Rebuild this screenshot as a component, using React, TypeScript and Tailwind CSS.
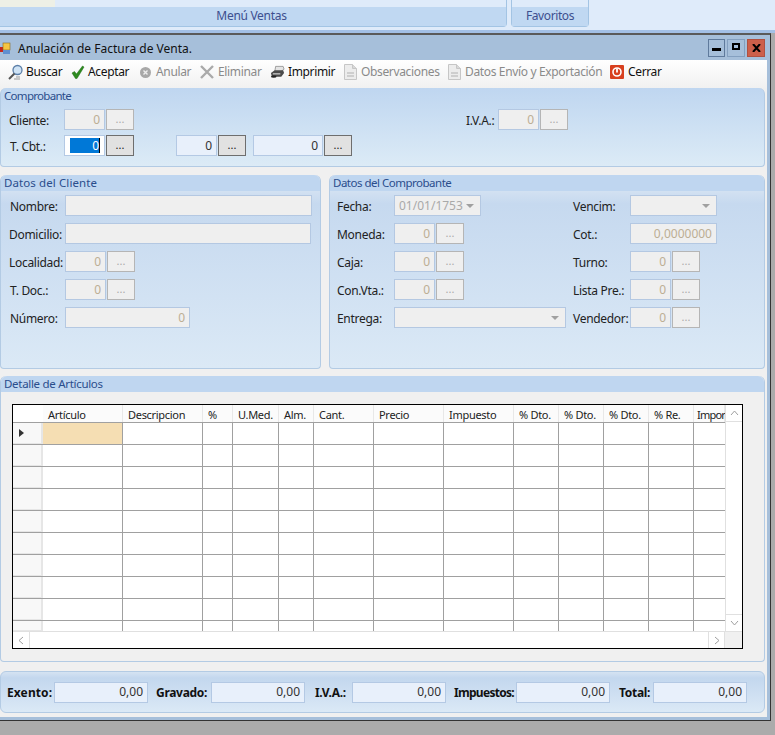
const font = { fontFamily: '"Noto Sans", sans-serif' };

const Field = ({ w, value, active, tone = "off" }: { w: string; value?: string; active?: boolean; tone?: "off" | "on" }) => (
  <div
    className={`${w} h-[21px] shrink-0 border flex items-center justify-end pr-1 text-[12px] ${
      tone === "on" ? "bg-[#e8f0fb] border-[#b4c9e4] text-[#333]" : "bg-[#efefef] border-[#b4c8e2] text-[#bcae94]"
    } ${active ? "bg-white" : ""}`}
  >
    {active ? <span className="bg-[#0078d7] text-white w-[30px] h-[15px] leading-[15px] text-right border-r border-black">0</span> : value}
  </div>
);

const Dots = ({ on }: { on?: boolean }) => (
  <div
    className={`w-[28px] h-[21px] shrink-0 ml-px border flex items-center justify-center text-[11px] leading-none pb-0.5 ${
      on ? "bg-[#e1e1e1] border-[#6e6e6e] text-[#222]" : "bg-[#efefef] border-[#b5b5b5] text-[#aaa]"
    }`}
  >
    ...
  </div>
);

const Lookup = ({ w = "w-[41px]", on, active }: { w?: string; on?: boolean; active?: boolean }) => (
  <div className="flex">
    <Field w={w} value="0" tone={on ? "on" : "off"} active={active} />
    <Dots on={on} />
  </div>
);

const Combo = ({ w, value }: { w: string; value?: string }) => (
  <div className={`${w} h-[21px] shrink-0 border border-[#b4c8e2] bg-[#efefef] flex items-center justify-between pl-1 pr-1.5 text-[12px] text-[#a9a9a9]`}>
    <span>{value}</span>
    <span className="w-0 h-0 border-x-[4px] border-x-transparent border-t-[4px] border-t-[#a0a0a0]" />
  </div>
);

const Label = ({ w, children, bold, pl = "pl-0", track = "tracking-[-0.3px]" }: { w: string; children: string; bold?: boolean; pl?: string; track?: string }) => (
  <div className={`${w} ${pl} ${track} pt-[2px] shrink-0 text-[12px] whitespace-nowrap ${bold ? "font-bold text-[#111]" : "text-[#222]"}`}>{children}</div>
);

const Title = ({ children, track }: { children: string; track: string }) => (
  <div className={`h-4 rounded-t-md pl-[3px] text-[11.5px] leading-[15px] text-[#2a4d8c] whitespace-nowrap ${track}`}>{children}</div>
);

const tools = [
  { label: "Buscar", w: "w-[63px]", slot: "w-[15px]", icon: "search" },
  { label: "Aceptar", w: "w-[68px]", slot: "w-[14px]", icon: "check" },
  { label: "Anular", w: "w-[61px]", slot: "w-[14px]", icon: "anular", off: true },
  { label: "Eliminar", w: "w-[70px]", slot: "w-[15px]", icon: "x", off: true },
  { label: "Imprimir", w: "w-[74px]", slot: "w-[15px]", icon: "print" },
  { label: "Observaciones", w: "w-[104px]", slot: "w-[14px]", icon: "doc", off: true },
  { label: "Datos Envío y Exportación", w: "w-[162px]", slot: "w-[14px]", icon: "doc", off: true },
  { label: "Cerrar", w: "w-[60px]", slot: "w-[15px]", icon: "power" },
];

const ToolIcon = ({ name }: { name: string }) => {
  if (name === "search")
    return (
      <svg width="15" height="17" viewBox="0 0 15 17">
        <circle cx="9.5" cy="6" r="4.5" fill="#cfe3f5" stroke="#5c7fa8" strokeWidth="1.3" />
        <path d="M6.5 9.5 1 15" stroke="#555" strokeWidth="2" />
        <path d="M6 15h6M8 13h4" stroke="#999" strokeWidth="1" />
      </svg>
    );
  if (name === "check")
    return (
      <svg width="14" height="14" viewBox="0 0 14 14">
        <path d="M1 8l2.5-1.5L5.5 9 11.5 1 13 2 6 13.5H4.5z" fill="#2e8b1f" stroke="#1d6a14" strokeWidth=".5" />
      </svg>
    );
  if (name === "anular")
    return (
      <svg width="13" height="13" viewBox="0 0 13 13">
        <circle cx="6.5" cy="6.5" r="5.5" fill="#a8a8a8" />
        <path d="M4.5 4.5l4 4M8.5 4.5l-4 4" stroke="#eee" strokeWidth="1.4" />
      </svg>
    );
  if (name === "x")
    return (
      <svg width="14" height="14" viewBox="0 0 14 14">
        <path d="M1 1l12 12M13 1 1 13" stroke="#aaa" strokeWidth="2.4" />
      </svg>
    );
  if (name === "print")
    return (
      <svg width="15" height="14" viewBox="0 0 16 14">
        <path d="M6 1h8l1 3-4 3H5z" fill="#e4e4e4" stroke="#777" strokeWidth=".7" />
        <path d="M1 8l4-3h9l1 3-3 4H2z" fill="#4a4a4a" />
        <path d="M3 9h8" stroke="#ddd" strokeWidth="1.2" />
        <ellipse cx="4" cy="12" rx="3" ry="1.2" fill="#222" />
      </svg>
    );
  if (name === "doc")
    return (
      <svg width="13" height="16" viewBox="0 0 13 16">
        <path d="M.5.5h8l4 4v11H.5z" fill="#ececec" stroke="#c6c6c6" />
        <path d="M8.5.5v4h4" fill="#d8d8d8" stroke="#c6c6c6" />
        <path d="M3 9h7M3 12h7" stroke="#b0b0b0" />
      </svg>
    );
  return (
    <svg width="14" height="14" viewBox="0 0 14 14">
      <rect width="14" height="14" rx="1" fill="#d8401f" />
      <circle cx="7" cy="7" r="4" fill="none" stroke="#fff" strokeWidth="1.6" />
      <path d="M7 3.5v4" stroke="#fff" strokeWidth="1.8" />
    </svg>
  );
};

const columns = ["Artículo", "Descripcion", "%", "U.Med.", "Alm.", "Cant.", "Precio", "Impuesto", "% Dto.", "% Dto.", "% Dto.", "% Re.", "Impor"];
const colWidths = ["w-[80px]", "w-[80px]", "w-[30px]", "w-[46px]", "w-[35px]", "w-[60px]", "w-[70px]", "w-[70px]", "w-[45px]", "w-[45px]", "w-[45px]", "w-[45px]", "w-[31px]"];
const rows = [22, 22, 22, 22, 22, 22, 22, 22, 22, 10];
const rowHeights: Record<number, string> = { 22: "h-[22px]", 10: "h-[10px]" };

const totals = [
  { label: "Exento:", lw: "w-[47px]", gap: "ml-[6px]", track: "tracking-[0.1px]" },
  { label: "Gravado:", lw: "w-[55px]", gap: "ml-[8px]", track: "tracking-[-0.3px]" },
  { label: "I.V.A.:", lw: "w-[37px]", gap: "ml-[10px]", track: "tracking-[-0.3px]" },
  { label: "Impuestos:", lw: "w-[62px]", gap: "ml-[8px]", track: "tracking-[-0.7px]" },
  { label: "Total:", lw: "w-[34px]", gap: "ml-[9px]", track: "tracking-[-0.3px]" },
];

export default function App() {
  return (
    <div style={font} className="w-[775px] h-[735px] overflow-hidden bg-[#ababab] flex flex-col">
      {/* ribbon */}
      <div className="h-[30px] shrink-0 bg-[#dfebfa] flex">
        <div className="w-[507px] h-[27px] border-r border-b border-[#a3c4e4] rounded-br-sm flex flex-col">
          <div className="h-[7px] flex">
            <div className="w-[55px] bg-[#eef0e6]" />
            <div className="flex-1 bg-[#dfebfa]" />
          </div>
          <div className="flex-1 bg-[#c0d8f2] text-[12px] leading-[18px] text-center text-[#3d4f8f] pr-[3px] tracking-[-0.3px]">Menú Ventas</div>
        </div>
        <div className="w-[78px] h-[27px] ml-[4px] border-x border-b border-[#a3c4e4] rounded-b-sm flex flex-col">
          <div className="h-[7px] bg-[#dfebfa]" />
          <div className="flex-1 bg-[#c0d8f2] text-[12px] leading-[18px] text-center text-[#3d4f8f] tracking-[-0.4px]">Favoritos</div>
        </div>
      </div>
      <div className="h-[3px] shrink-0 bg-[#a3c0e6]" />

      {/* window */}
      <div className="w-[771px] h-[688px] shrink-0 border-t-2 border-r border-b border-t-[#5a5a5a] border-r-[#333] border-b-[#333] bg-[#a6bfda] flex flex-col">
        <div className="h-[25px] shrink-0 flex items-center">
          <svg width="14" height="14" viewBox="0 0 14 14" className="shrink-0 -ml-[2px] mt-[2px]">
            <rect x="1" y="5" width="4" height="5" fill="#c8261c" />
            <rect x="5" y="1" width="7" height="7" fill="#f5c542" stroke="#8a6a20" strokeWidth=".6" />
            <rect x="5" y="8" width="7" height="4" fill="#5f8fd0" />
          </svg>
          <span className="ml-[6px] pt-[3px] text-[12px] text-[#111]">Anulación de Factura de Venta.</span>
          <div className="ml-auto flex gap-[2px] mr-[5px]">
            <div className="w-[17px] h-[18px] border border-[#5f7a9c] flex items-center justify-center">
              <div className="w-[9px] h-[3px] bg-black mt-[4px]" />
            </div>
            <div className="w-[18px] h-[18px] border border-[#84a0c0] flex items-center justify-center">
              <div className="w-[8px] h-[7px] border-2 border-black -mt-[3px]" />
            </div>
            <div className="w-[18px] h-[18px] bg-[#cd5f4a] border border-[#b05040] flex items-center justify-center">
              <svg width="9" height="8" viewBox="0 0 9 8">
                <path d="M1 0l7 8M8 0 1 8" stroke="#000" strokeWidth="2" />
              </svg>
            </div>
          </div>
        </div>

        <div className="mr-[3px] mb-[3px] flex-1 bg-[#f0f0f0] flex flex-col">
          <div className="h-[28px] shrink-0 bg-gradient-to-b from-white to-[#f1f1f1] flex items-center pl-[8px] pb-[4px]">
            {tools.map((t) => (
              <div key={t.label} className={`${t.w} shrink-0 flex items-center gap-[3px] text-[12px] whitespace-nowrap tracking-[-0.35px] ${t.off ? "text-[#8a8a8a]" : "text-[#111]"}`}>
                <span className={`${t.slot} shrink-0 flex`}>
                  <ToolIcon name={t.icon} />
                </span>
                <span>{t.label}</span>
              </div>
            ))}
          </div>

          <div className="pr-[2px] flex flex-col">
            <div className="h-[79px] rounded-t-md rounded-b-[4px] border border-t-0 border-[#b3cbe4] bg-gradient-to-b from-[#bfd6f0] to-[#dcebf6]">
              <Title track="tracking-[-0.7px]">Comprobante</Title>
              <div className="flex flex-col gap-[5px] pt-[5px] pl-[8px]">
                <div className="flex items-center">
                  <Label w="w-[55px]">Cliente:</Label>
                  <Lookup />
                  <div className="w-[332px] shrink-0" />
                  <Label w="w-[32px]">I.V.A.:</Label>
                  <Lookup />
                </div>
                <div className="flex items-center">
                  <Label w="w-[55px]" pl="pl-px">T. Cbt.:</Label>
                  <Lookup on active />
                  <div className="w-[42px] shrink-0" />
                  <Lookup on />
                  <div className="w-[7px] shrink-0" />
                  <Lookup on w="w-[70px]" />
                </div>
              </div>
            </div>

            <div className="flex mt-[8px] gap-[8px]">
              <div className="w-[321px] h-[194px] shrink-0 rounded-t-md rounded-b-[4px] border border-t-0 border-[#b3cbe4] bg-gradient-to-b from-[#e2ebf5] via-[#c6d9ef] via-[15%] to-[#dbe9f6]">
                <div className="bg-[#bfd6f0] rounded-t-md">
                  <Title track="tracking-[0.1px]">Datos del Cliente</Title>
                </div>
                <div className="flex flex-col gap-[7px] pt-[4px] pl-[8px]">
                  <div className="flex items-center"><Label w="w-[56px]" pl="pl-px">Nombre:</Label><Field w="w-[247px]" /></div>
                  <div className="flex items-center"><Label w="w-[56px]">Domicilio:</Label><Field w="w-[246px]" /></div>
                  <div className="flex items-center"><Label w="w-[56px]">Localidad:</Label><Lookup /></div>
                  <div className="flex items-center"><Label w="w-[56px]" pl="pl-px">T. Doc.:</Label><Lookup /></div>
                  <div className="flex items-center"><Label w="w-[56px]" pl="pl-px">Número:</Label><Field w="w-[125px]" value="0" /></div>
                </div>
              </div>
              <div className="w-[436px] h-[194px] shrink-0 rounded-t-md rounded-b-[4px] border border-t-0 border-[#b3cbe4] bg-gradient-to-b from-[#e2ebf5] via-[#c6d9ef] via-[15%] to-[#dbe9f6]">
                <div className="bg-[#bfd6f0] rounded-t-md">
                  <Title track="tracking-[-0.5px]">Datos del Comprobante</Title>
                </div>
                <div className="flex pt-[4px] pl-[7px]">
                  <div className="w-[236px] shrink-0 flex flex-col gap-[7px]">
                    <div className="flex items-center"><Label w="w-[57px]">Fecha:</Label><Combo w="w-[87px]" value="01/01/1753" /></div>
                    <div className="flex items-center"><Label w="w-[57px]">Moneda:</Label><Lookup /></div>
                    <div className="flex items-center"><Label w="w-[57px]">Caja:</Label><Lookup /></div>
                    <div className="flex items-center"><Label w="w-[57px]">Con.Vta.:</Label><Lookup /></div>
                    <div className="flex items-center"><Label w="w-[57px]">Entrega:</Label><Combo w="w-[172px]" /></div>
                  </div>
                  <div className="flex-1 flex flex-col gap-[7px]">
                    <div className="flex items-center"><Label w="w-[57px]">Vencim:</Label><Combo w="w-[87px]" /></div>
                    <div className="flex items-center"><Label w="w-[57px]">Cot.:</Label><Field w="w-[87px]" value="0,0000000" /></div>
                    <div className="flex items-center"><Label w="w-[57px]">Turno:</Label><Lookup /></div>
                    <div className="flex items-center"><Label w="w-[57px]">Lista Pre.:</Label><Lookup /></div>
                    <div className="flex items-center"><Label w="w-[57px]">Vendedor:</Label><Lookup /></div>
                  </div>
                </div>
              </div>
            </div>

            <div className="mt-[7px] h-[286px] shrink-0 rounded-t-md rounded-b-[4px] border border-t-0 border-[#b3cbe4]">
              <div className="bg-[#bfd6f0] rounded-t-md">
                <Title track="tracking-[-0.3px]">Detalle de Artículos</Title>
              </div>
              <div className="mt-[12px] ml-[11px] w-[731px] h-[245px] border border-black bg-white flex flex-col">
                <div className="flex-1 flex min-h-0">
                  <div className="flex-1 overflow-hidden">
                    <div className="flex h-[18px] border-b border-[#a0a0a0] text-[11px] text-[#222] tracking-[-0.3px]">
                      <div className="w-[30px] shrink-0" />
                      {columns.map((c, i) => (
                        <div key={i} className={`${colWidths[i]} shrink-0 pt-[2px] leading-[15px] border-r border-[#e8e8e8] whitespace-nowrap bg-[#fbfbfb] ${i === 12 ? "pl-[3px] tracking-[-0.8px]" : "pl-[5px]"}`}>{c}</div>
                      ))}
                    </div>
                    {rows.map((h, r) => (
                      <div key={r} className={`flex ${rowHeights[h]} ${h === 22 ? "border-b border-[#a0a0a0]" : ""}`}>
                        <div className="w-[30px] shrink-0 bg-[#f8f8f8] border-r-2 border-b border-[#e6e6e6] flex items-center pl-[6px]">
                          {r === 0 && <span className="w-0 h-0 border-y-[4px] border-y-transparent border-l-[5px] border-l-[#333]" />}
                        </div>
                        {colWidths.map((w, i) => (
                          <div key={i} className={`${w} shrink-0 ${i < 12 ? "border-r border-[#a0a0a0]" : ""} ${r === 0 && i === 0 ? "bg-[#f5deb3]" : ""}`} />
                        ))}
                      </div>
                    ))}
                  </div>
                  <div className="w-[17px] shrink-0 border-l border-[#e0e0e0] flex flex-col items-center justify-between text-[#a0a0a0]">
                    <div className="h-[17px] w-full border-b border-[#e0e0e0] flex items-center justify-center">
                      <svg width="9" height="6" viewBox="0 0 9 6"><path d="M1 5l3.5-4L8 5" fill="none" stroke="#a0a0a0" /></svg>
                    </div>
                    <div className="h-[17px] w-full border-t border-[#e0e0e0] flex items-center justify-center">
                      <svg width="9" height="6" viewBox="0 0 9 6"><path d="M1 1l3.5 4L8 1" fill="none" stroke="#a0a0a0" /></svg>
                    </div>
                  </div>
                </div>
                <div className="h-[17px] shrink-0 flex border-t border-[#e0e0e0]">
                  <div className="w-[17px] border-r border-[#e0e0e0] flex items-center justify-center">
                    <svg width="6" height="9" viewBox="0 0 6 9"><path d="M5 1 1 4.5 5 8" fill="none" stroke="#a0a0a0" /></svg>
                  </div>
                  <div className="flex-1" />
                  <div className="w-[17px] border-x border-[#e0e0e0] flex items-center justify-center">
                    <svg width="6" height="9" viewBox="0 0 6 9"><path d="M1 1l4 3.5L1 8" fill="none" stroke="#a0a0a0" /></svg>
                  </div>
                  <div className="w-[17px] bg-[#f0f0f0]" />
                </div>
              </div>
            </div>

            <div className="mt-[9px] h-[42px] shrink-0 rounded-md border border-[#b3cbe4] bg-gradient-to-b from-[#d5e3f2] via-[#c3d7ee] via-[15%] to-[#dbe9f6] flex items-center">
              {totals.map((t) => (
                <div key={t.label} className={`flex items-center ${t.gap}`}>
                  <Label w={t.lw} bold track={t.track}>{t.label}</Label>
                  <Field w="w-[94px]" value="0,00" tone="on" />
                </div>
              ))}
            </div>
          </div>
        </div>
      </div>
    </div>
  );
}
